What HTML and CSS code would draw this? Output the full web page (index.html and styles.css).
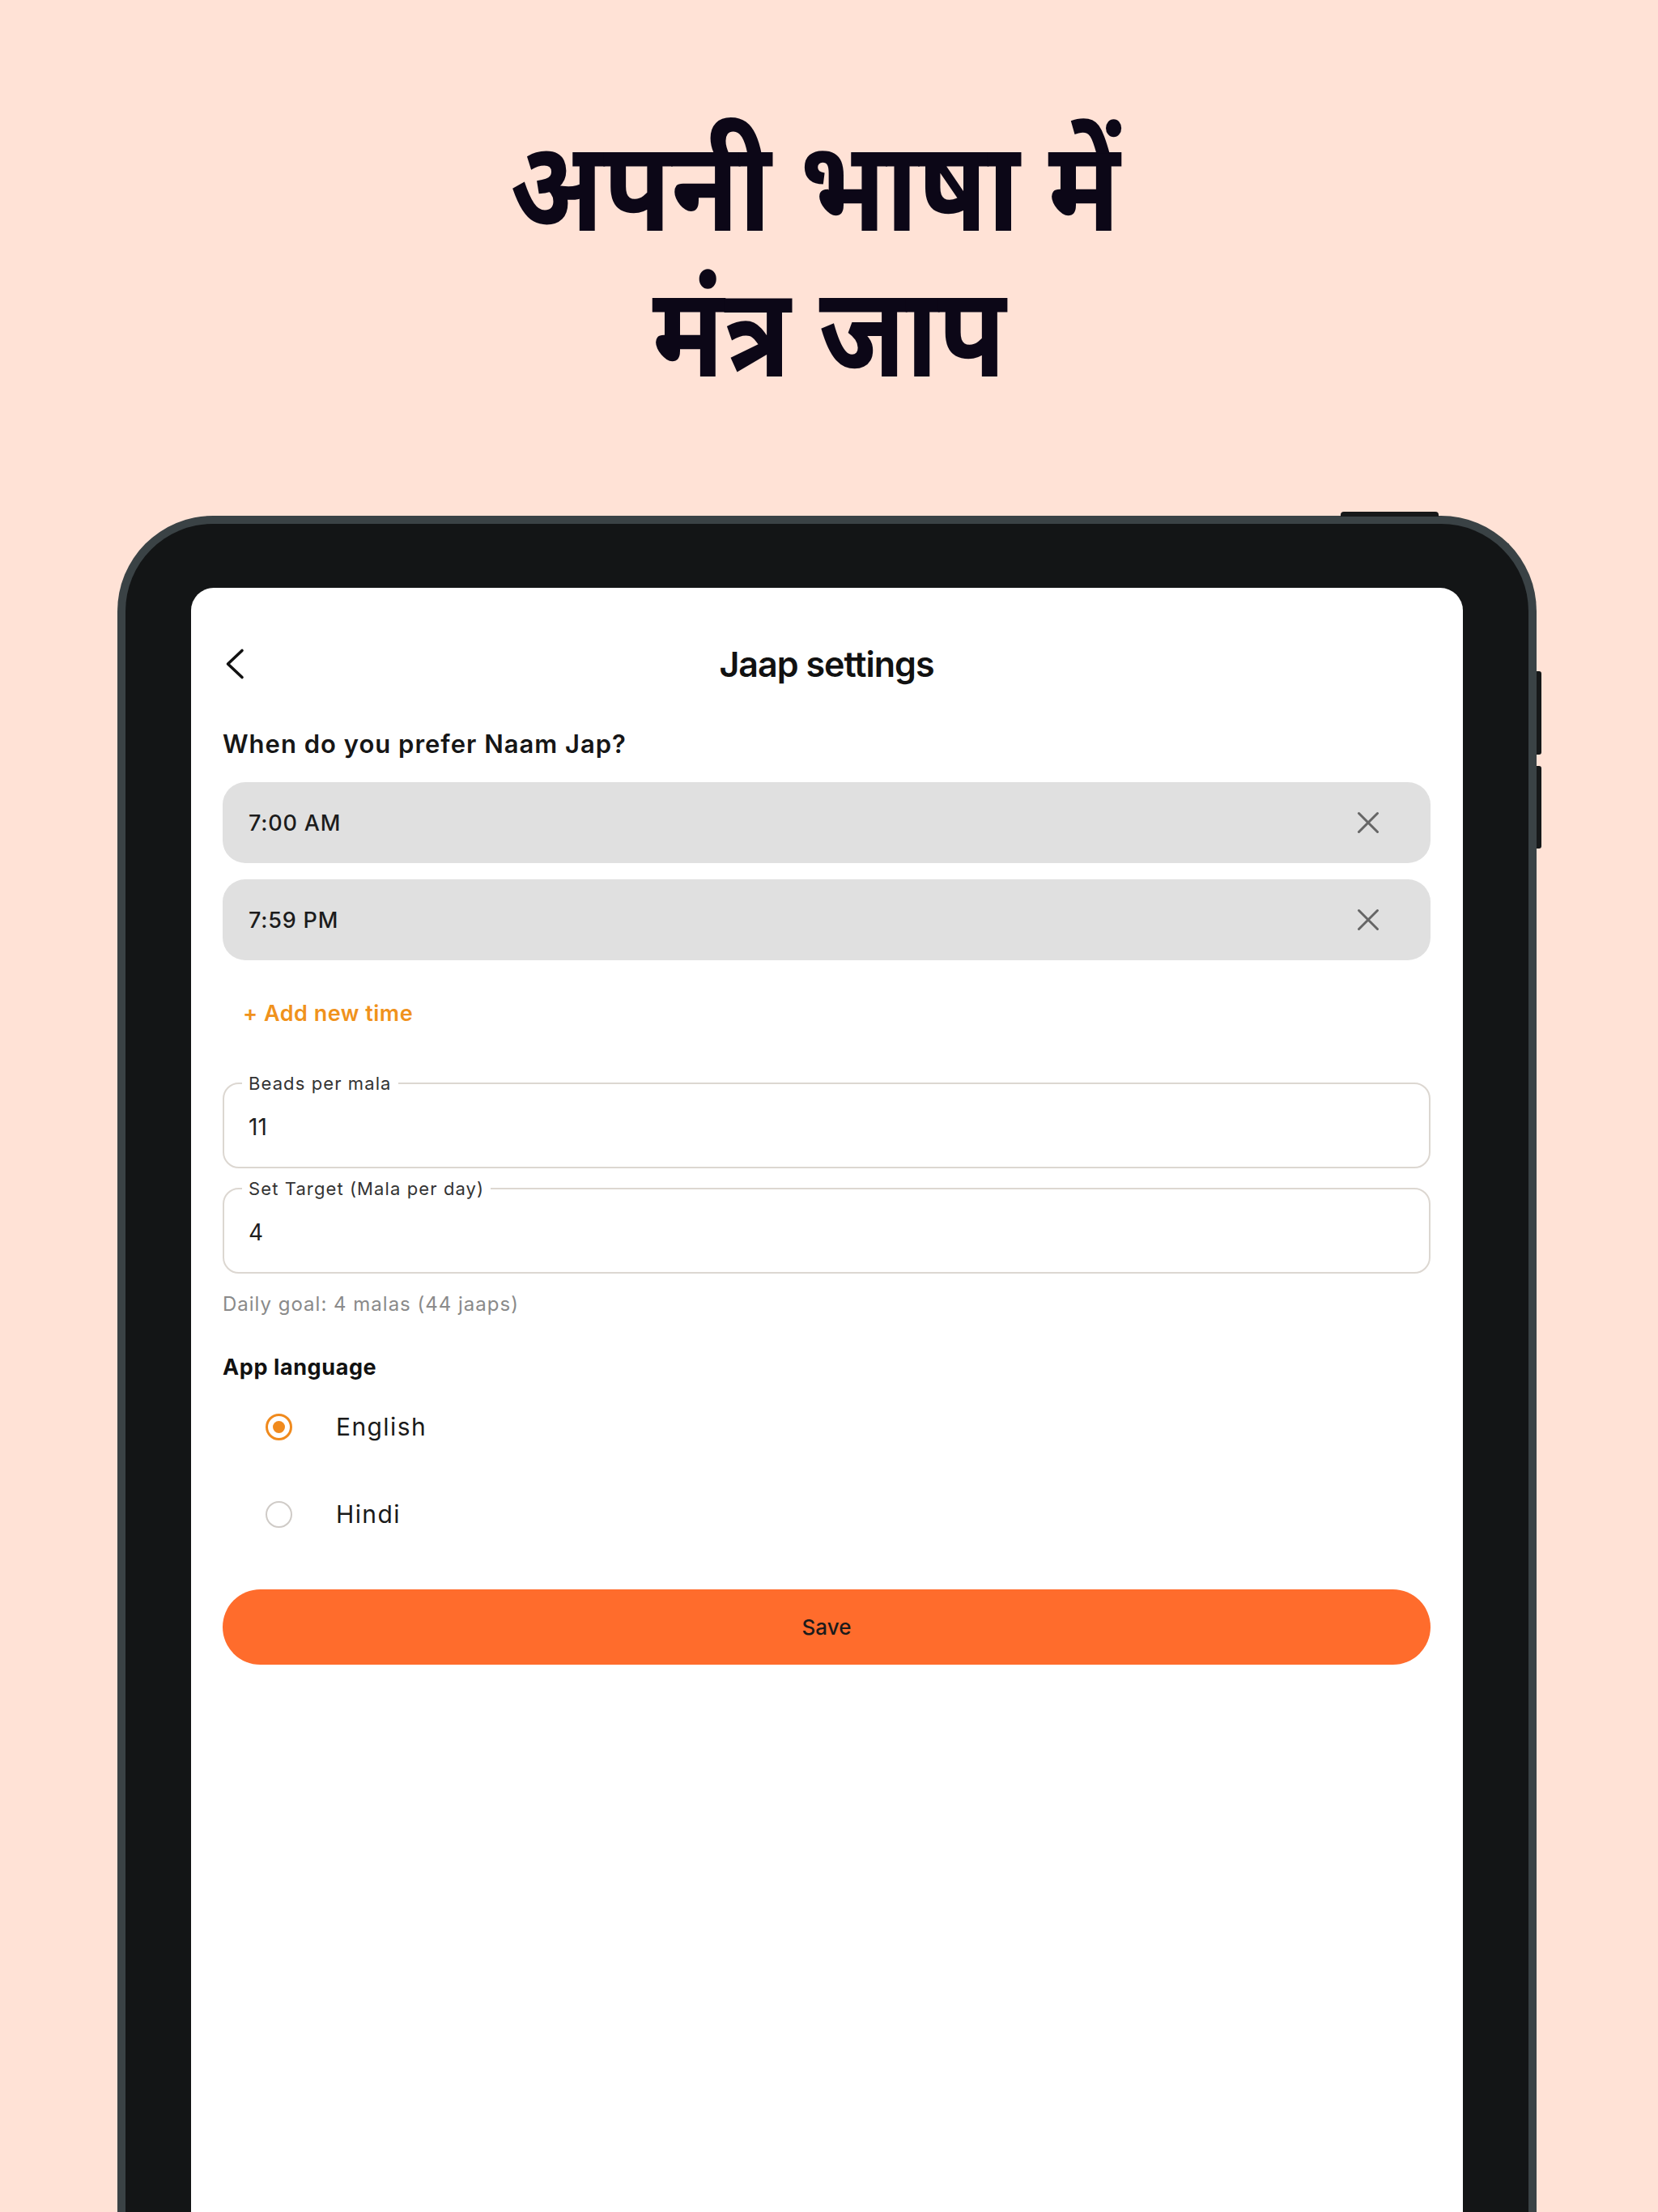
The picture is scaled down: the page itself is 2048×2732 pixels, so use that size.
FILE: index.html
```html
<!DOCTYPE html>
<html lang="hi">
<head>
<meta charset="utf-8">
<title>Jaap settings</title>
<link rel="stylesheet" href="styles.css">
</head>
<body>
<div class="page">
  <header class="hero">
    <h1 class="hero-title"><span class="hero-line hero-line-1">अपनी भाषा में</span><span class="hero-line">मंत्र जाप</span></h1>
  </header>
  <div class="device">
    <span class="btn-top"></span>
    <span class="btn-side btn-side-1"></span>
    <span class="btn-side btn-side-2"></span>
    <main class="screen">
      <div class="topbar">
        <svg class="back" width="32" height="44" viewBox="0 0 32 44" aria-hidden="true">
          <polyline points="24,5.5 6.5,22 24,38.5" fill="none" stroke="#111" stroke-width="3.6" stroke-linecap="round" stroke-linejoin="round"/>
        </svg>
        <div class="topbar-title">Jaap settings</div>
        <div></div>
      </div>
      <div class="question">When do you prefer Naam Jap?</div>
      <div class="times">
        <div class="time-row">
          <span class="time-text">7:00 AM</span>
          <svg class="close" width="30" height="30" viewBox="0 0 30 30" aria-hidden="true">
            <path d="M3.5 3.5 L26.5 26.5 M26.5 3.5 L3.5 26.5" stroke="#666" stroke-width="3" stroke-linecap="round"/>
          </svg>
        </div>
        <div class="time-row">
          <span class="time-text">7:59 PM</span>
          <svg class="close" width="30" height="30" viewBox="0 0 30 30" aria-hidden="true">
            <path d="M3.5 3.5 L26.5 26.5 M26.5 3.5 L3.5 26.5" stroke="#666" stroke-width="3" stroke-linecap="round"/>
          </svg>
        </div>
      </div>
      <div class="add-time">+ Add new time</div>
      <fieldset class="field">
        <legend class="field-label">Beads per mala</legend>
        <div class="field-value">11</div>
      </fieldset>
      <fieldset class="field field-2">
        <legend class="field-label">Set Target (Mala per day)</legend>
        <div class="field-value">4</div>
      </fieldset>
      <div class="hint">Daily goal: 4 malas (44 jaaps)</div>
      <div class="section-title">App language</div>
      <div class="radios">
        <div class="radio-row">
          <span class="radio radio-on"><span class="radio-dot"></span></span>
          <span class="radio-text">English</span>
        </div>
        <div class="radio-row">
          <span class="radio"></span>
          <span class="radio-text">Hindi</span>
        </div>
      </div>
      <div class="save">Save</div>
    </main>
  </div>
</div>
</body>
</html>
```
FILE: styles.css
```css
html, body {
  margin: 0;
  padding: 0;
}
body {
  background: #ffe2d6;
  width: 2048px;
  height: 2732px;
  overflow: hidden;
  font-family: Inter, "Noto Sans", "Liberation Sans", sans-serif;
  color: #161616;
}
.page {
  width: 2048px;
  height: 2732px;
  display: flex;
  flex-direction: column;
}
.hero {
  height: 637px;
  flex: none;
  box-sizing: border-box;
  padding-top: 157px;
}
.hero-title {
  margin: 0;
  text-align: center;
  font-family: "Noto Sans Devanagari", "Noto Sans", "Lohit Devanagari", sans-serif;
  font-weight: 700;
  font-size: 155px;
  color: #0c0717;
  transform: scaleX(0.877);
  transform-origin: 50% 50%;
}
.hero-line {
  display: block;
  height: 180px;
  line-height: 180px;
}
.hero-line-1 {
  padding-right: 40px;
}
.device {
  position: relative;
  margin-left: 145px;
  width: 1753px;
  height: 2095px;
  flex: none;
  box-sizing: border-box;
  background: #131516;
  border: 10px solid #3a4245;
  border-bottom: 0;
  border-radius: 118px 118px 0 0;
  padding: 79px 81px 0 81px;
}
.btn-top {
  position: absolute;
  top: -15px;
  left: 1501px;
  width: 121px;
  height: 6px;
  background: #161819;
  border-radius: 4px 4px 0 0;
}
.btn-side {
  position: absolute;
  right: -16px;
  width: 6px;
  background: #161819;
  border-radius: 0 3px 3px 0;
}
.btn-side-1 { top: 182px; height: 103px; }
.btn-side-2 { top: 299px; height: 102px; }
.screen {
  display: block;
  height: 2006px;
  background: #ffffff;
  border-radius: 28px 28px 0 0;
  box-sizing: border-box;
  padding: 44px 40px 0 39px;
}
.topbar {
  height: 100px;
  display: grid;
  grid-template-columns: 1fr auto 1fr;
  align-items: center;
}
.back {
  display: block;
  margin-left: 0;
}
.topbar-title {
  font-size: 43px;
  font-weight: 600;
  letter-spacing: -1px;
  color: #111;
}
.question {
  margin-top: 29px;
  font-size: 31px;
  line-height: 40px;
  font-weight: 600;
  letter-spacing: 1px;
  color: #161616;
}
.times {
  margin-top: 27px;
  display: flex;
  flex-direction: column;
  gap: 20px;
}
.time-row {
  height: 100px;
  background: #e0e0e0;
  border-radius: 28px;
  display: flex;
  align-items: center;
  justify-content: space-between;
  padding: 0 62px 0 32px;
}
.time-text {
  font-size: 27px;
  font-weight: 500;
  letter-spacing: 0.8px;
  color: #1c1c1c;
}
.close { display: block; }
.add-time {
  margin-top: 48px;
  padding-left: 25px;
  font-size: 27px;
  line-height: 36px;
  font-weight: 600;
  letter-spacing: 0.5px;
  color: #f0921c;
}
.field {
  margin: 55px 0 0 0;
  padding: 24px 0 32px 30px;
  border: 2px solid #dcd7d1;
  border-radius: 20px;
  min-width: 0;
}
.field-2 {
  margin-top: 12px;
}
.field-label {
  margin-left: -8px;
  padding: 0 8px;
  font-size: 22px;
  line-height: 26px;
  letter-spacing: 1.1px;
  color: #333;
}
.field-value {
  font-size: 28px;
  line-height: 34px;
  color: #1e1e1e;
}
.hint {
  margin-top: 23px;
  font-size: 24px;
  line-height: 30px;
  letter-spacing: 1px;
  color: #8a8a8a;
}
.section-title {
  margin-top: 46px;
  font-size: 27px;
  line-height: 34px;
  font-weight: 700;
  letter-spacing: 0.6px;
  color: #111;
}
.radios {
  margin-top: 2px;
}
.radio-row {
  height: 108px;
  display: flex;
  align-items: center;
  padding-left: 53px;
  gap: 54px;
}
.radio {
  width: 33px;
  height: 33px;
  box-sizing: border-box;
  border: 2.5px solid #cfcbc7;
  border-radius: 50%;
  display: flex;
  align-items: center;
  justify-content: center;
  flex: none;
}
.radio-on {
  border: 3px solid #f08a1d;
}
.radio-dot {
  width: 15px;
  height: 15px;
  border-radius: 50%;
  background: #f08a1d;
}
.radio-text {
  font-size: 30px;
  letter-spacing: 1.4px;
  color: #1a1a1a;
}
.save {
  margin-top: 39px;
  height: 93px;
  border-radius: 47px;
  background: #ff6c2c;
  display: flex;
  align-items: center;
  justify-content: center;
  font-size: 26px;
  font-weight: 500;
  color: #1b1b1b;
}
```
